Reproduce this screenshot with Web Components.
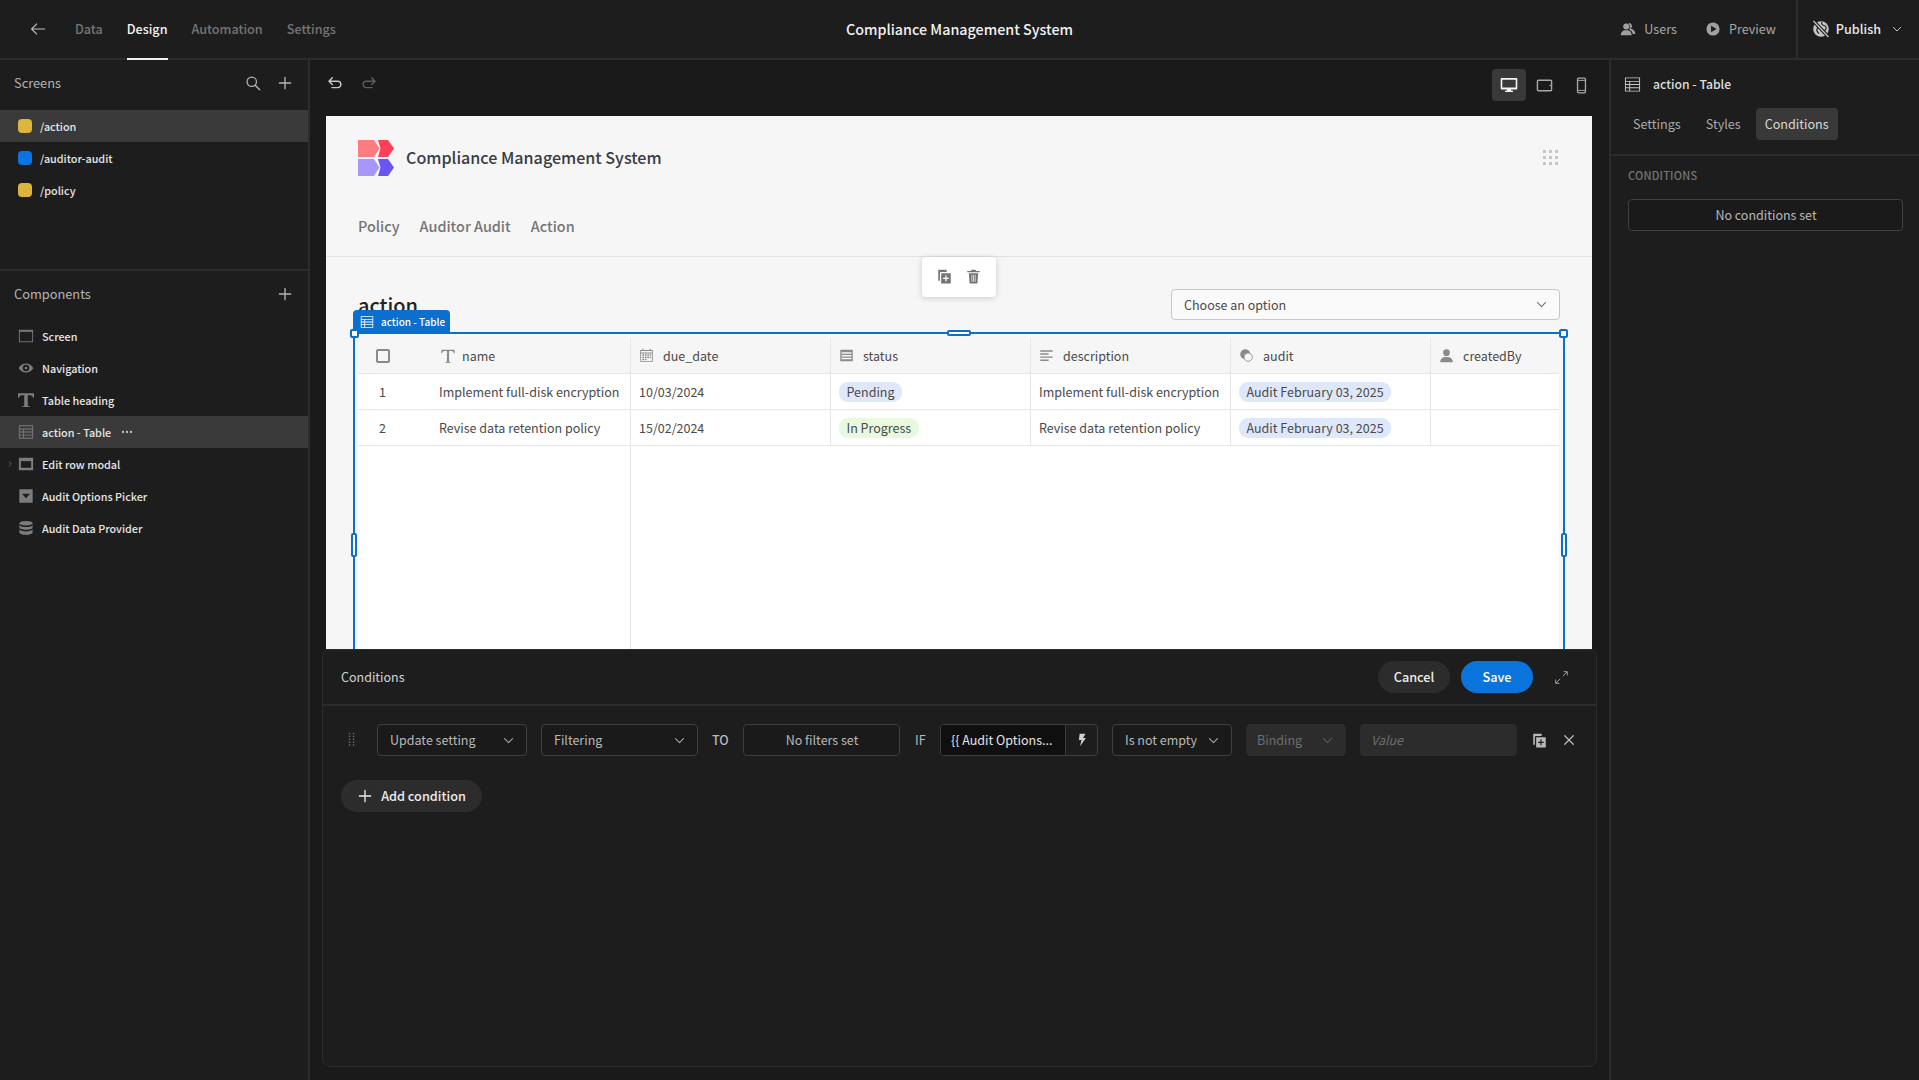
<!DOCTYPE html>
<html>
<head>
<meta charset="utf-8">
<title>Compliance Management System</title>
<style>
  html, body { margin: 0; height: 100%; background: #1a1a1a; overflow: hidden; }
</style>
</head>
<body>
<builder-app></builder-app>
<script>
const FONT = '"Noto Sans CJK JP", "Open Sans", sans-serif';

const ICONS = {
  back: '<path d="M16 9H3M8 3.6 2.6 9 8 14.4" fill="none" stroke="currentColor" stroke-width="1.2"/>',
  search: '<circle cx="7.6" cy="7.6" r="5.3" fill="none" stroke="currentColor" stroke-width="1.4"/><path d="m11.5 11.5 5 5" stroke="currentColor" stroke-width="1.6" stroke-linecap="round"/>',
  plus: '<path d="M9 2.6v12.8M2.6 9h12.8" stroke="currentColor" stroke-width="1.5" stroke-linecap="round"/>',
  chevron: '<path d="m3.5 6.5 5.5 5.5 5.5-5.5" fill="none" stroke="currentColor" stroke-width="1.5" stroke-linecap="round" stroke-linejoin="round"/>',
  chevronRight: '<path d="m7 4 5 5-5 5" fill="none" stroke="currentColor" stroke-width="1.6" stroke-linecap="round" stroke-linejoin="round"/>',
  undo: '<path d="M6 3.2 2.2 7 6 10.8M2.6 7H12a3.6 3.6 0 0 1 0 7.2H5.5" fill="none" stroke="currentColor" stroke-width="1.6" stroke-linecap="round" stroke-linejoin="round"/>',
  redo: '<path d="M12 3.2 15.8 7 12 10.8M15.4 7H6a3.6 3.6 0 0 0 0 7.2h6.5" fill="none" stroke="currentColor" stroke-width="1.6" stroke-linecap="round" stroke-linejoin="round"/>',
  desktop: '<path fill-rule="evenodd" d="M1.5 2h15a.8.8 0 0 1 .8.8v9.8a.8.8 0 0 1-.8.8H11l.4 1.4H13v1.2H5v-1.2h1.6l.4-1.4H1.5a.8.8 0 0 1-.8-.8V2.800a.8.8 0 0 1 .8-.8Zm.8 1.700v7.900h13.400V3.700Z" fill="currentColor"/>',
  tablet: '<rect x="1.500" y="3.500" width="15" height="11" rx="1" fill="none" stroke="currentColor" stroke-width="1.500"/><circle cx="15" cy="9" r=".8" fill="currentColor"/>',
  phone: '<rect x="4.800" y="1.200" width="8.400" height="15.600" rx="1.200" fill="none" stroke="currentColor" stroke-width="1.400"/><path d="M5 3.600h8M5 14.200h8" stroke="currentColor" stroke-width="1"/>',
  users: '<circle cx="7" cy="6.200" r="3.400" fill="currentColor"/><path d="M.8 16c0-3.600 2.200-5 4-5.600h4.400c1.800.6 4 2 4 5.600Z" fill="currentColor"/><path d="M9.500 2.200a3.400 3.400 0 0 1 2.400 6.200c1.800.4 5.300 2 5.300 6.100h-2.800c-.6-2.500-2.500-4-4-4.800 1.200-1.800 1.200-5-.9-7.500Z" fill="currentColor"/>',
  play: '<path fill-rule="evenodd" d="M9 1.600a7.400 7.400 0 1 1 0 14.800A7.400 7.400 0 0 1 9 1.600ZM6.800 5.400v7.200L13 9Z" fill="currentColor"/>',
  publish: '<circle cx="9" cy="9" r="7.800" fill="currentColor"/><path d="M4.500 5.500C6 7 6 8 5 9.500s1 3 2 4M10 2c-1 2 0 3 2 3.500s3 2.500 1.500 4-2 3-2 4.500" fill="none" stroke="#1d1d1d" stroke-width="1.100"/><path d="M1.500 1 16.500 17" stroke="#1d1d1d" stroke-width="3.400"/><path d="M1.500 1 16.500 17" stroke="currentColor" stroke-width="1.300"/>',
  table: '<path fill-rule="evenodd" d="M1 1.500h16v15H1Zm1 1v2.700h14V2.500Zm0 3.700v2.300h3.500V6.200Zm4.500 0v2.300H16V6.200ZM2 9.500v2.500h3.500V9.500Zm4.500 0V12H16V9.500ZM2 13v2.500h3.500V13Zm4.500 0v2.500H16V13Z" fill="currentColor"/>',
  screen: '<rect x="1.500" y="2.500" width="15" height="13" fill="none" stroke="currentColor" stroke-width="1"/><rect x="1.500" y="2.500" width="15" height="1.800" fill="currentColor"/>',
  eye: '<path fill-rule="evenodd" d="M9 3.800c4.500 0 7.400 3.500 8.200 5.200-.8 1.700-3.700 5.200-8.200 5.200S1.600 10.700.8 9C1.600 7.300 4.500 3.800 9 3.800Zm0 1.500a3.700 3.700 0 1 0 0 7.400 3.700 3.700 0 0 0 0-7.400Zm0 2.200A1.500 1.500 0 1 1 9 10.500a1.500 1.500 0 0 1 0-3Z" fill="currentColor"/>',
  heading: '<path d="M0 1.500h18v5h-1.200C16.400 4.400 15.400 3.700 13.500 3.700H11v10.800c0 1.200.4 1.500 2.200 1.600V17H4.800v-.9C6.600 16 7 15.700 7 14.500V3.700H4.500C2.600 3.700 1.600 4.400 1.200 6.500H0Z" fill="currentColor"/>',
  text: '<path d="M1.500 2h15v4h-1c-.3-1.700-1-2.500-2.500-2.500H10.200v10.900c0 1 .4 1.300 1.800 1.400v.7H6v-.7c1.400-.1 1.800-.4 1.800-1.400V3.500H5C3.500 3.500 2.800 4.300 2.500 6h-1Z" fill="currentColor"/>',
  modal: '<rect x="1" y="2" width="16" height="14" fill="currentColor"/><rect x="3" y="5.500" width="12" height="8" fill="#1d1d1d" stroke="#aaa" stroke-width=".6" stroke-dasharray="1 1"/>',
  picker: '<path fill-rule="evenodd" d="M1.500 1.500h15v15h-15ZM4.500 6.500 9 11.500l4.500-5Z" fill="currentColor"/>',
  database: '<ellipse cx="9" cy="3.600" rx="7.400" ry="2.600" fill="currentColor"/><path d="M1.600 5.500c1 1.600 3.800 2.400 7.400 2.400s6.400-.8 7.400-2.400v3c0 1.400-3.300 2.600-7.400 2.600S1.600 9.900 1.600 8.500Zm0 5c1 1.600 3.800 2.400 7.400 2.400s6.400-.8 7.400-2.400v3.600c0 1.400-3.300 2.600-7.400 2.600s-7.400-1.200-7.400-2.600Z" fill="currentColor"/>',
  dots: '<g fill="currentColor"><rect x="1" y="1" width="3.200" height="3.200"/><rect x="7.400" y="1" width="3.200" height="3.200"/><rect x="13.800" y="1" width="3.200" height="3.200"/><rect x="1" y="7.400" width="3.200" height="3.200"/><rect x="7.400" y="7.400" width="3.200" height="3.200"/><rect x="13.800" y="7.400" width="3.200" height="3.200"/><rect x="1" y="13.800" width="3.200" height="3.200"/><rect x="7.400" y="13.800" width="3.200" height="3.200"/><rect x="13.800" y="13.800" width="3.200" height="3.200"/></g>',
  more: '<g fill="currentColor"><circle cx="3" cy="9" r="1.700"/><circle cx="9" cy="9" r="1.700"/><circle cx="15" cy="9" r="1.700"/></g>',
  calendar: '<path fill-rule="evenodd" d="M1.500 2.500H4V1h1.200v1.500h7.600V1H14v1.500h2.500v14h-15ZM2.500 3.500v2h13v-2Zm0 3v9h13v-9Z" fill="currentColor"/><g fill="currentColor"><rect x="4" y="7.500" width="2" height="1.800"/><rect x="7" y="7.500" width="2" height="1.800"/><rect x="10" y="7.500" width="2" height="1.800"/><rect x="13" y="7.500" width="1.500" height="1.800"/><rect x="4" y="10.300" width="2" height="1.800"/><rect x="7" y="10.300" width="2" height="1.800"/><rect x="10" y="10.300" width="2" height="1.800"/><rect x="13" y="10.300" width="1.500" height="1.800"/><rect x="4" y="13" width="2" height="1.500"/><rect x="7" y="13" width="2" height="1.500"/></g>',
  list: '<path fill-rule="evenodd" d="M1.500 2h15v14h-15Zm1.500 3v2h12V5Zm0 3.300v2h12v-2Zm0 3.300v2h12v-2Z" fill="currentColor"/>',
  align: '<path d="M1.500 3.500h15M1.500 7.200h10M1.500 10.900h15M1.500 14.600h10" stroke="currentColor" stroke-width="1.700"/>',
  relation: '<path d="M7.500 1.500a6 6 0 0 1 3 11.200A6 6 0 0 1 1.500 7.500a6 6 0 0 1 6-6Z" fill="currentColor"/><circle cx="11" cy="11" r="5" fill="#f6f6f6" stroke="currentColor" stroke-width="1"/>',
  user: '<circle cx="9" cy="5.600" r="4" fill="currentColor"/><path d="M1.500 17c0-4 2.600-5.600 5.400-6.300h4.200c2.800.7 5.400 2.300 5.400 6.300Z" fill="currentColor"/>',
  duplicate: '<path d="M1.500 1h10v2.500H5A1.500 1.500 0 0 0 3.500 5v9h-2ZM5 5h11.500v12.500H5Z" fill="currentColor"/><path d="M10.700 7.800v7M7.300 11.300h6.800" stroke="var(--glyph, #fff)" stroke-width="1.500"/>',
  trash: '<path d="M6.500 1h5l.6 1.500H16.500V4H1.500V2.500h4.400ZM3.400 5h11.200l-.9 12.500H4.300Z" fill="currentColor"/><path d="M7 7v8.500M9 7v8.500M11 7v8.500" stroke="var(--glyph, #fff)" stroke-width=".8"/>',
  bolt: '<path d="M6 1h7.500l-3.200 5.300H14L6.500 17l1.800-8H5Z" fill="currentColor"/>',
  close: '<path d="m3.500 3.500 11 11M14.500 3.500l-11 11" stroke="currentColor" stroke-width="1.700" stroke-linecap="round"/>',
  expand: '<path d="M10.500 7.500 15.500 2.500M11.500 2h4.500v4.500M7.500 10.500l-5 5M6.500 16H2v-4.500" fill="none" stroke="currentColor" stroke-width="1.100"/>',
  drag: '<g fill="currentColor"><rect x="5.500" y="1" width="1.500" height="1.500"/><rect x="10" y="1" width="1.500" height="1.500"/><rect x="5.500" y="4.200" width="1.500" height="1.500"/><rect x="10" y="4.200" width="1.500" height="1.500"/><rect x="5.500" y="7.400" width="1.500" height="1.500"/><rect x="10" y="7.400" width="1.500" height="1.500"/><rect x="5.500" y="10.600" width="1.500" height="1.500"/><rect x="10" y="10.600" width="1.500" height="1.500"/><rect x="5.500" y="13.800" width="1.500" height="1.500"/><rect x="10" y="13.800" width="1.500" height="1.500"/></g>'
};

class UiIcon extends HTMLElement {
  constructor() {
    super();
    this.attachShadow({ mode: 'open' });
  }
  connectedCallback() {
    const size = this.getAttribute('size') || 18;
    const name = this.getAttribute('name');
    this.shadowRoot.innerHTML = `<style>
      :host { display: inline-flex; flex: none; width: ${size}px; height: ${size}px; }
      svg { display: block; width: 100%; height: 100%; }
    </style><svg viewBox="0 0 18 18" aria-hidden="true">${ICONS[name] || ''}</svg>`;
  }
}
customElements.define('ui-icon', UiIcon);

// all the other elements only differ by their template
const define = (tag, css, html) => {
  const template = document.createElement('template');
  template.innerHTML = `<style>${css}</style>${html}`;
  customElements.define(tag, class extends HTMLElement {
    constructor() {
      super();
      this.attachShadow({ mode: 'open' }).appendChild(template.content.cloneNode(true));
    }
  });
};

define('top-bar', `
  :host { display: flex; align-items: center; height: 58px; border-bottom: 2px solid #2c2c2c; background: #1d1d1d; position: relative; font-size: 12.6px; line-height: 20px; font-weight: 500; color: #757575; }
  .back { width: 18px; margin: 0 28px 0 29px; color: #bdbdbd; display: flex; }
  a { margin-right: 24px; height: 58px; line-height: 58px; box-sizing: border-box; }
  a.on { color: #f2f2f2; border-bottom: 2px solid #f2f2f2; height: 60px; margin-bottom: -2px; }
  .title { position: absolute; left: 0; right: 0; top: 19px; text-align: center; font-size: 14.3px; color: #f2f2f2; }
  .right { margin-left: auto; display: flex; align-items: center; height: 100%; font-weight: 400; color: #a8a8a8; }
  .right span { display: flex; align-items: center; gap: 8px; margin-right: 20px; }
  .right span:first-child { margin-right: 28px; }
  .right ui-icon { color: #a0a0a0; }
  .pub { height: 100%; border-left: 2px solid #2c2c2c; display: flex; align-items: center; gap: 6px; padding: 0 16px 0 14px; color: #e8e8e8; font-weight: 500; }
  .pub ui-icon { color: #c4c4c4; }
`, `
  <span class="back"><ui-icon name="back"></ui-icon></span>
  <a>Data</a><a class="on">Design</a><a>Automation</a><a>Settings</a>
  <div class="title">Compliance Management System</div>
  <div class="right">
    <span><ui-icon name="users" size="16"></ui-icon>Users</span>
    <span><ui-icon name="play" size="16"></ui-icon>Preview</span>
    <div class="pub"><ui-icon name="publish" size="18"></ui-icon>Publish<ui-icon name="chevron" size="12" style="margin-left:4px"></ui-icon></div>
  </div>
`);

define('side-row', `
  :host { display: flex; align-items: center; height: 32px; padding-left: 18px; gap: 8px; font-size: 10.8px; line-height: 16px; font-weight: 500; color: #e6e6e6; position: relative; white-space: nowrap; }
  :host([active]) { background: #3a3a3a; }
  ::slotted(ui-icon) { color: #7c7c7c; }
  ::slotted(i) { width: 14px; height: 14px; border-radius: 4px; flex: none; }
`, `<slot name="icon"></slot><slot></slot>`);

define('side-head', `
  :host { display: flex; align-items: center; height: 46px; padding: 0 14px; font-size: 12.8px; line-height: 20px; color: #b4b4b4; }
  .a { margin-left: auto; display: flex; gap: 16px; color: #b4b4b4; align-items: center; padding-right: 1px; }
`, `<slot></slot><div class="a"><slot name="actions"></slot></div>`);

define('left-panel', `
  :host { display: flex; flex-direction: column; background: #1d1d1d; border-right: 2px solid #2c2c2c; width: 308px; height: 100%; }
  .screens { height: 209px; border-bottom: 2px solid #2c2c2c; }
  .list { padding-top: 4px; display: flex; flex-direction: column; }
  .list.c { padding-top: 3px; }
`, `
  <div class="screens">
    <side-head>Screens
      <ui-icon slot="actions" name="search" size="16"></ui-icon>
      <ui-icon slot="actions" name="plus" size="16"></ui-icon>
    </side-head>
    <div class="list">
      <side-row active><i slot="icon" style="background:#dcb53f"></i>/action</side-row>
      <side-row><i slot="icon" style="background:#0a74e0"></i>/auditor-audit</side-row>
      <side-row><i slot="icon" style="background:#dcb53f"></i>/policy</side-row>
    </div>
  </div>
  <div>
    <side-head>Components
      <ui-icon slot="actions" name="plus" size="16"></ui-icon>
    </side-head>
    <div class="list c">
      <side-row><ui-icon slot="icon" name="screen" size="16"></ui-icon>Screen</side-row>
      <side-row><ui-icon slot="icon" name="eye" size="16"></ui-icon>Navigation</side-row>
      <side-row><ui-icon slot="icon" name="heading" size="16"></ui-icon>Table heading</side-row>
      <side-row active><ui-icon slot="icon" name="table" size="16"></ui-icon>action - Table<ui-icon name="more" size="12" style="color:#c8c8c8;margin-left:2px"></ui-icon></side-row>
      <side-row><ui-icon slot="icon" name="chevronRight" size="8" style="position:absolute;left:6px;top:12px"></ui-icon><ui-icon slot="icon" name="modal" size="16"></ui-icon>Edit row modal</side-row>
      <side-row><ui-icon slot="icon" name="picker" size="16"></ui-icon>Audit Options Picker</side-row>
      <side-row><ui-icon slot="icon" name="database" size="16"></ui-icon>Audit Data Provider</side-row>
    </div>
  </div>
`);

define('canvas-tools', `
  :host { display: flex; align-items: flex-start; height: 56px; padding: 9px 11px 0 17px; color: #c8c8c8; box-sizing: border-box; }
  ui-icon.u { margin-top: 6px; }
  .redo { color: #5e5e5e; margin-left: 18px; }
  .dev { margin-left: auto; display: flex; align-items: center; gap: 2px; }
  .dev span { width: 34px; height: 32px; display: flex; align-items: center; justify-content: center; border-radius: 4px; color: #a8a8a8; }
  .dev span.on { background: #393939; color: #f5f5f5; }
`, `
  <ui-icon class="u" name="undo" size="16"></ui-icon>
  <ui-icon class="u redo" name="redo" size="16"></ui-icon>
  <div class="dev">
    <span class="on"><ui-icon name="desktop" size="18"></ui-icon></span>
    <span style="margin-left:-1px;margin-right:1px"><ui-icon name="tablet" size="17"></ui-icon></span>
    <span><ui-icon name="phone" size="17"></ui-icon></span>
  </div>
`);

define('app-header', `
  :host { display: block; height: 141px; box-sizing: border-box; border-bottom: 1px solid #e2e2e2; padding: 24px 32px 0; }
  .brand { display: flex; align-items: center; gap: 12px; height: 36px; font-size: 16.1px; line-height: 24px; font-weight: 500; color: #393c44; }
  .brand svg { width: 36px; height: 36px; display: block; }
  .name { margin-top: -2px; }
  .dots { margin: -1px 1px 0 auto; color: #c6c6c6; }
  nav { display: flex; gap: 20px; margin-top: 38px; font-size: 14.4px; line-height: 24px; font-weight: 500; color: #757575; }
`, `
  <div class="brand">
    <svg viewBox="0 0 36 36">
      <path d="M0 0h16l5.500 8.500L16 17H0Z" fill="#ff7b82"/><path d="M20 0h10l6 8.500L30 17H20l2.500-8.500Z" fill="#ff4058"/>
      <path d="M0 19h16l5.500 8.500L16 36H0Z" fill="#a896fb"/><path d="M20 19h10l6 8.500L30 36H20l2.500-8.500Z" fill="#6855f2"/>
    </svg>
    <span class="name">Compliance Management System</span>
    <ui-icon class="dots" name="dots" size="17"></ui-icon>
  </div>
  <nav><span>Policy</span><span>Auditor Audit</span><span>Action</span></nav>
`);

define('head-cell', `
  :host { display: flex; align-items: center; gap: 9px; padding-left: 8px; height: 36px; color: #4a4a4a; font-size: 12.5px; line-height: 20px; border-right: 1px solid #e6e6e6; box-sizing: border-box; }
  ::slotted(ui-icon) { color: #8a8a8a; }
`, `<slot name="icon"></slot><slot></slot>`);

define('status-pill', `
  :host { display: inline-block; padding: 0 7.500px; height: 20px; line-height: 20px; border-radius: 9px; background: var(--pill, #dfe8fb); font-size: 12.5px; color: #4a4a4a; white-space: nowrap; }
`, `<slot></slot>`);

define('data-table', `
  :host { display: block; background: #fff; height: 414px; position: relative; color: #4a4a4a; font-size: 12.5px; }
  .grid { display: grid; grid-template-columns: 74px 199px 200px 200px 200px 200px 128px; }
  .th { background: #f6f6f6; border-bottom: 1px solid #e6e6e6; }
  .td { height: 36px; box-sizing: border-box; border-bottom: 1px solid #e6e6e6; border-right: 1px solid #e6e6e6; padding-left: 8px; display: flex; align-items: center; line-height: 20px; white-space: nowrap; overflow: hidden; }
  .td.n { padding-left: 7px; }
  .td.num { border-right: 0; padding-left: 21px; }
  .last { border-right: 0; }
  .check { height: 36px; display: flex; align-items: center; padding-left: 18px; box-sizing: border-box; }
  .check i { width: 10px; height: 10px; border: 2px solid #8a8a8a; border-radius: 2px; }
  .fill { position: absolute; top: 108px; bottom: 0; left: 0; width: 273px; border-right: 1px solid #e6e6e6; box-sizing: border-box; }
`, `
  <div class="grid">
    <div class="th check"><i></i></div>
    <head-cell class="th" style="gap:6px"><ui-icon slot="icon" name="text" size="16"></ui-icon>name</head-cell>
    <head-cell class="th"><ui-icon slot="icon" name="calendar" size="15"></ui-icon>due_date</head-cell>
    <head-cell class="th"><ui-icon slot="icon" name="list" size="15"></ui-icon>status</head-cell>
    <head-cell class="th"><ui-icon slot="icon" name="align" size="15"></ui-icon>description</head-cell>
    <head-cell class="th"><ui-icon slot="icon" name="relation" size="15"></ui-icon>audit</head-cell>
    <head-cell class="th" style="border-right:0"><ui-icon slot="icon" name="user" size="15"></ui-icon>createdBy</head-cell>

    <div class="td num">1</div>
    <div class="td n">Implement full-disk encryption</div>
    <div class="td">10/03/2024</div>
    <div class="td"><status-pill>Pending</status-pill></div>
    <div class="td">Implement full-disk encryption</div>
    <div class="td"><status-pill>Audit February 03, 2025</status-pill></div>
    <div class="td last"></div>

    <div class="td num">2</div>
    <div class="td n">Revise data retention policy</div>
    <div class="td">15/02/2024</div>
    <div class="td"><status-pill style="--pill:#e8f9de">In Progress</status-pill></div>
    <div class="td">Revise data retention policy</div>
    <div class="td"><status-pill>Audit February 03, 2025</status-pill></div>
    <div class="td last"></div>
  </div>
  <div class="fill"></div>
`);

define('select-frame', `
  :host { position: absolute; left: -5px; right: -6px; top: -6px; bottom: -6px; border: 2px solid #0d6fc9; pointer-events: none; display: block; }
  .tag { position: absolute; left: -2px; top: -24px; height: 22px; width: 97px; box-sizing: border-box; background: #0b6fd0; border-radius: 4px 4px 0 0; color: #fff; font-size: 10px; line-height: 16px; font-weight: 500; display: flex; align-items: center; gap: 7px; padding: 2px 0 0 7px; white-space: nowrap; }
  .h { position: absolute; background: #fff; border: 2px solid #0d6fc9; box-sizing: border-box; border-radius: 2px; }
  .tl { left: -5px; top: -5px; width: 9px; height: 9px; }
  .tr { right: -5px; top: -5px; width: 9px; height: 9px; }
  .tc { left: 50%; margin-left: -12px; top: -4px; width: 24px; height: 6px; }
  .ml { left: -4px; top: 50%; margin-top: -12px; width: 6px; height: 24px; }
  .mr { right: -4px; top: 50%; margin-top: -12px; width: 6px; height: 24px; }
`, `
  <div class="tag"><ui-icon name="table" size="14"></ui-icon>action - Table</div>
  <i class="h tl"></i><i class="h tr"></i><i class="h tc"></i><i class="h ml"></i><i class="h mr"></i>
`);

define('float-tools', `
  :host { position: absolute; left: 596px; top: 141px; width: 74px; height: 40px; box-sizing: border-box; padding-bottom: 1px; background: #fff; border-radius: 4px; box-shadow: 0 1px 6px rgba(0,0,0,.18); display: flex; align-items: center; justify-content: center; gap: 14px; color: #757575; --glyph: #fff; }
`, `<ui-icon name="duplicate" size="15"></ui-icon><ui-icon name="trash" size="15"></ui-icon>`);

define('app-preview', `
  :host { display: block; margin: 0 17px 0 16px; height: 533px; background: #f6f6f6; position: relative; overflow: hidden; }
  .body { padding: 32px 33px 0 32px; }
  .row { display: flex; align-items: center; justify-content: space-between; height: 31px; margin-bottom: 18px; }
  h1 { margin: 0; font-size: 20px; line-height: 30px; font-weight: 500; color: #232323; }
  .select { width: 389px; height: 31px; box-sizing: border-box; border: 1px solid #c8c8c8; border-radius: 4px; background: #fafafa; display: flex; align-items: center; justify-content: space-between; padding: 0 11px 0 12px; margin-right: -1px; font-size: 12.5px; line-height: 20px; color: #4a4a4a; }
  .select ui-icon { color: #6e6e6e; }
  .wrap { position: relative; }
`, `
  <app-header></app-header>
  <div class="body">
    <div class="row"><h1>action</h1><div class="select">Choose an option<ui-icon name="chevron" size="13"></ui-icon></div></div>
    <div class="wrap"><data-table></data-table><select-frame></select-frame></div>
  </div>
  <float-tools></float-tools>
`);

define('dark-box', `
  :host { display: flex; align-items: center; justify-content: space-between; height: 32px; box-sizing: border-box; border: 1px solid #3f3f3f; border-radius: 4px; background: #1a1a1a; padding: 0 11px 0 12px; font-size: 12.5px; line-height: 20px; color: #b8b8b8; white-space: nowrap; flex: none; }
  :host([center]) { justify-content: center; }
  :host([off]) { border-color: #2c2c2c; background: #2c2c2c; color: #6e6e6e; padding-left: 10px; }
  ::slotted(ui-icon) { color: #a8a8a8; }
  :host([off]) ::slotted(ui-icon) { color: #5a5a5a; }
`, `<slot></slot>`);

define('pill-button', `
  :host { display: inline-flex; align-items: center; justify-content: center; gap: 8px; height: 32px; border-radius: 16px; background: #2c2c2c; color: #ececec; font-size: 12.7px; line-height: 20px; font-weight: 500; box-sizing: border-box; white-space: nowrap; }
  :host([cta]) { background: #0a74da; color: #fff; }
`, `<slot></slot>`);

define('conditions-drawer', `
  :host { position: absolute; left: 12px; right: 12px; top: 589px; bottom: 13px; border: 1px solid #2c2c2c; border-radius: 8px; background: #1d1d1d; display: flex; flex-direction: column; box-sizing: border-box; overflow: hidden; }
  header { height: 54px; border-bottom: 2px solid #2c2c2c; display: flex; align-items: center; padding: 0 18px; font-size: 12.5px; line-height: 20px; color: #d4d4d4; flex: none; }
  .acts { margin-left: auto; display: flex; align-items: center; gap: 11px; padding-right: 9px; }
  .expand { margin-left: 10px; color: #a8a8a8; }
  .row { display: flex; align-items: center; padding: 18px 0 0 18px; height: 32px; }
  .drag { width: 18px; margin: 0 15px 0 3px; color: #777; display: flex; }
  .word { font-size: 12.5px; line-height: 20px; color: #b8b8b8; flex: none; margin: 0 14px; width: 17px; }
  .word.if { margin: 0 16px 0 15px; width: 9px; }
  .word.to { font-weight: 500; }
  .bind { display: flex; width: 158px; height: 32px; box-sizing: border-box; border: 1px solid #3f3f3f; border-radius: 4px; font-size: 12.5px; line-height: 20px; color: #e4e4e4; flex: none; overflow: hidden; }
  .bind b { font-weight: 400; flex: 1; background: #0f0f0f; padding-left: 10px; display: flex; align-items: center; border-right: 1px solid #3f3f3f; white-space: nowrap; }
  .bind span { width: 31px; display: flex; align-items: center; justify-content: center; color: #d0d0d0; }
  .tail { color: #b8b8b8; --glyph: #1d1d1d; }
  .add { padding: 24px 0 0 18px; }
`, `
  <header>Conditions
    <div class="acts">
      <pill-button style="width:72px">Cancel</pill-button>
      <pill-button cta style="width:72px">Save</pill-button>
      <ui-icon class="expand" name="expand" size="15"></ui-icon>
    </div>
  </header>
  <div class="row">
    <span class="drag"><ui-icon name="drag" size="16"></ui-icon></span>
    <dark-box style="width:150px">Update setting<ui-icon name="chevron" size="13"></ui-icon></dark-box>
    <dark-box style="width:157px;margin-left:14px">Filtering<ui-icon name="chevron" size="13"></ui-icon></dark-box>
    <span class="word to">TO</span>
    <dark-box center style="width:157px">No filters set</dark-box>
    <span class="word if">IF</span>
    <div class="bind"><b>{{ Audit Options...</b><span><ui-icon name="bolt" size="14"></ui-icon></span></div>
    <dark-box style="width:120px;margin-left:14px">Is not empty<ui-icon name="chevron" size="13"></ui-icon></dark-box>
    <dark-box off style="width:100px;margin-left:14px">Binding<ui-icon name="chevron" size="13"></ui-icon></dark-box>
    <dark-box off style="width:157px;margin-left:14px;font-style:italic;justify-content:flex-start">Value</dark-box>
    <ui-icon class="tail" name="duplicate" size="15" style="margin-left:15px"></ui-icon>
    <ui-icon class="tail" name="close" size="14" style="margin-left:15px"></ui-icon>
  </div>
  <div class="add"><pill-button style="width:141px"><ui-icon name="plus" size="16"></ui-icon>Add condition</pill-button></div>
`);

define('canvas-area', `
  :host { display: block; position: relative; background: #1a1a1a; height: 100%; overflow: hidden; }
`, `
  <canvas-tools></canvas-tools>
  <app-preview></app-preview>
  <conditions-drawer></conditions-drawer>
`);

define('right-panel', `
  :host { display: flex; flex-direction: column; background: #1d1d1d; border-left: 2px solid #2c2c2c; height: 100%; }
  .title { display: flex; align-items: center; gap: 12px; padding: 0 0 0 13px; height: 48px; font-size: 12.2px; line-height: 20px; font-weight: 500; color: #dedede; flex: none; }
  .title ui-icon { color: #c8c8c8; }
  .tabs { display: flex; align-items: flex-start; height: 46px; border-bottom: 2px solid #2c2c2c; padding: 0 0 0 13px; font-size: 12.6px; line-height: 20px; color: #aaa; gap: 7px; flex: none; }
  .tabs span { padding: 0 9px; height: 32px; line-height: 32px; border-radius: 4px; }
  .tabs .on { background: #393939; color: #d8d8d8; margin-left: -1px; }
  .body { padding: 11px 16px 0 17px; }
  .label { font-size: 11px; line-height: 16px; font-weight: 500; color: #757575; margin-bottom: 16px; letter-spacing: .2px; }
`, `
  <div class="title"><ui-icon name="table" size="17"></ui-icon>action - Table</div>
  <div class="tabs"><span>Settings</span><span>Styles</span><span class="on">Conditions</span></div>
  <div class="body">
    <div class="label">CONDITIONS</div>
    <dark-box center>No conditions set</dark-box>
  </div>
`);

define('builder-app', `
  :host { display: grid; grid-template-columns: 310px 1fr 310px; grid-template-rows: 60px 1fr; width: 100vw; height: 100vh; font-family: ${FONT}; background: #1a1a1a; overflow: hidden; }
  top-bar { grid-column: 1 / 4; }
`, `
  <top-bar></top-bar>
  <left-panel></left-panel>
  <canvas-area></canvas-area>
  <right-panel></right-panel>
`);
</script>
</body>
</html>
